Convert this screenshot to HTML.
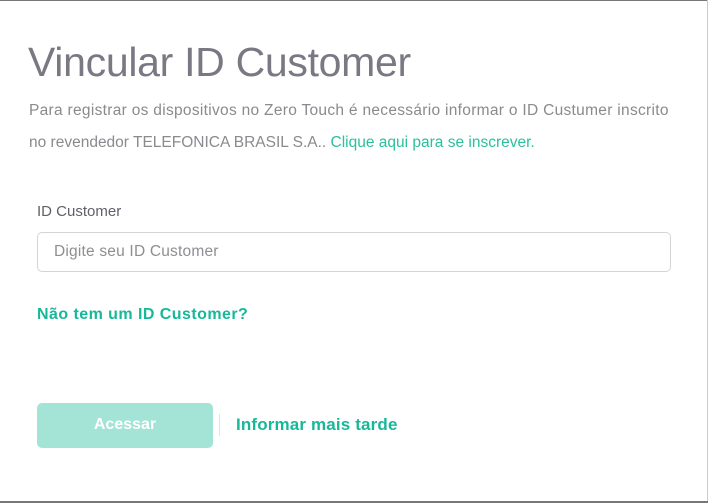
<!DOCTYPE html>
<html><head><meta charset="utf-8"><style>
html,body{margin:0;padding:0;background:#fff;}
body{width:708px;height:503px;position:relative;overflow:hidden;font-family:"Liberation Sans",sans-serif;}
.top{position:absolute;left:0;top:0;width:708px;height:1px;background:#777;}
.bot{position:absolute;left:0;top:501px;width:708px;height:2px;background:#777;}
.right{position:absolute;left:707px;top:0;width:1px;height:503px;background:#ccc;}
h1{position:absolute;left:28px;top:38px;margin:0;font-weight:normal;font-size:41px;color:#7a7983;white-space:nowrap;letter-spacing:-0.3px;line-height:48px;}
.p{position:absolute;left:29px;top:95px;width:690px;font-size:15.5px;line-height:32px;color:#8a8a8f;letter-spacing:0.3px;white-space:nowrap;}
.p .l2{letter-spacing:0px;}
.p a{color:#2bbf9c;text-decoration:none;}
.lbl{position:absolute;left:37px;top:203px;font-size:15px;color:#606068;}
.inp{position:absolute;left:37px;top:232px;width:632px;height:38px;border:1px solid #d4d4d8;border-radius:5px;}
.inp span{position:absolute;left:16px;top:10px;font-size:15.5px;color:#8e8e93;letter-spacing:0.2px;}
.q{position:absolute;left:37px;top:306px;font-size:16px;font-weight:bold;color:#17b899;letter-spacing:0.45px;}
.btn{position:absolute;left:37px;top:403px;width:176px;height:45px;background:#a3e4d7;border-radius:5px;color:#fff;font-weight:bold;font-size:16px;text-align:center;line-height:43px;}
.sep{position:absolute;left:219px;top:414px;width:1px;height:22px;background:#e2e2e2;}
.later{position:absolute;left:236px;top:415px;font-size:17px;font-weight:bold;color:#17b899;letter-spacing:0.15px;}
</style></head><body>
<div class="top"></div><div class="right"></div><div class="bot"></div>
<h1>Vincular ID Customer</h1>
<div class="p">Para registrar os dispositivos no Zero Touch é necessário informar o ID Custumer inscrito<br><span class="l2">no revendedor TELEFONICA BRASIL S.A.. <a>Clique aqui para se inscrever.</a></span></div>
<div class="lbl">ID Customer</div>
<div class="inp"><span>Digite seu ID Customer</span></div>
<div class="q">Não tem um ID Customer?</div>
<div class="btn">Acessar</div>
<div class="sep"></div>
<div class="later">Informar mais tarde</div>
</body></html>
